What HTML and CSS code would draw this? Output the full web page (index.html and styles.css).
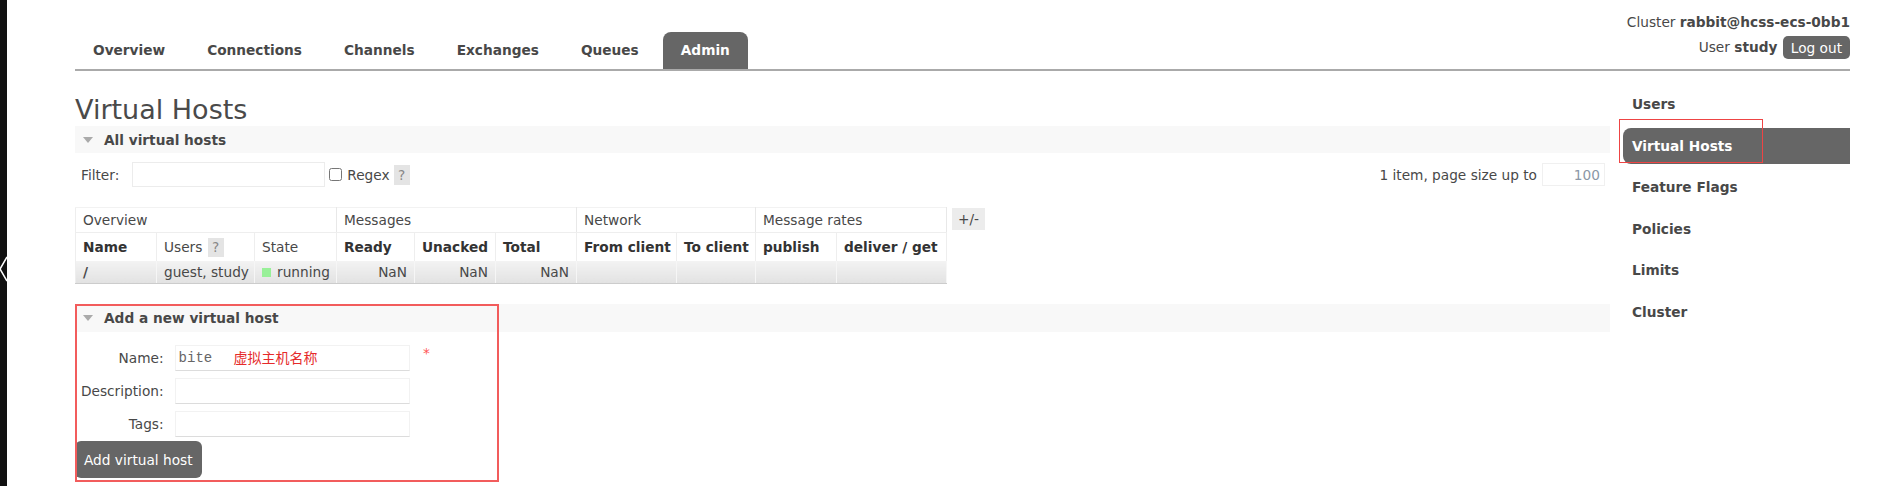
FILE: index.html
```html
<!DOCTYPE html>
<html>
<head>
    <title>RabbitMQ Management</title>
    <link rel="stylesheet" href="styles.css">
</head>
<body>
<div class="edge">
    <svg class="chevron" width="8" height="28" viewBox="0 0 8 28"><polyline points="7,2 0,14 7,26" fill="none" stroke="#fff" stroke-width="1.5"/></svg>
</div>
<div class="page">
    <div class="header">
        <ul class="tabs">
            <li><a>Overview</a></li>
            <li><a>Connections</a></li>
            <li><a>Channels</a></li>
            <li><a>Exchanges</a></li>
            <li><a>Queues</a></li>
            <li class="selected"><a>Admin</a></li>
        </ul>
        <div class="login">
            <p class="cluster">Cluster <b>rabbit@hcss-ecs-0bb1</b></p>
            <p class="user">User <b>study</b> <button class="logout">Log out</button></p>
        </div>
    </div>

    <div class="main">
        <div class="content">
            <h1>Virtual Hosts</h1>

            <div class="section">
                <h2><span class="arrow"></span>All virtual hosts</h2>
                <div class="filter-row">
                    <div class="filter">
                        <label>Filter:</label>
                        <input type="text" class="filter-input">
                        <input type="checkbox" class="regex-box">
                        <label class="regex">Regex</label>
                        <span class="help">?</span>
                    </div>
                    <div class="paging">
                        1 item, page size up to
                        <input type="text" class="page-size" value="100">
                    </div>
                </div>

                <div class="table-wrap">
                    <table class="list">
                        <colgroup>
                            <col style="width: 81px">
                            <col style="width: 98px">
                            <col style="width: 82px">
                            <col style="width: 78px">
                            <col style="width: 81px">
                            <col style="width: 81px">
                            <col style="width: 100px">
                            <col style="width: 79px">
                            <col style="width: 81px">
                            <col style="width: 110px">
                        </colgroup>
                        <tr class="group">
                            <th colspan="3">Overview</th>
                            <th colspan="3">Messages</th>
                            <th colspan="2">Network</th>
                            <th colspan="2">Message rates</th>
                        </tr>
                        <tr class="cols">
                            <th class="sort">Name</th>
                            <th>Users <span class="help">?</span></th>
                            <th>State</th>
                            <th class="sort">Ready</th>
                            <th class="sort">Unacked</th>
                            <th class="sort">Total</th>
                            <th class="sort">From client</th>
                            <th class="sort">To client</th>
                            <th class="sort">publish</th>
                            <th class="sort">deliver / get</th>
                        </tr>
                        <tr class="row">
                            <td><b>/</b></td>
                            <td>guest, study</td>
                            <td><span class="running"></span>running</td>
                            <td class="num">NaN</td>
                            <td class="num">NaN</td>
                            <td class="num">NaN</td>
                            <td></td>
                            <td></td>
                            <td></td>
                            <td></td>
                        </tr>
                    </table>
                    <span class="plusminus">+/-</span>
                </div>
            </div>

            <div class="section add">
                <h2><span class="arrow"></span>Add a new virtual host</h2>
                <form onsubmit="return false">
                    <table class="form">
                        <tr>
                            <th>Name:</th>
                            <td>
                                <span class="field">
                                    <input type="text" class="name-input" value="bite">
                                    <span class="note">虚拟主机名称</span>
                                </span>
                                <span class="mand">*</span>
                            </td>
                        </tr>
                        <tr>
                            <th>Description:</th>
                            <td><input type="text"></td>
                        </tr>
                        <tr>
                            <th>Tags:</th>
                            <td><input type="text"></td>
                        </tr>
                    </table>
                    <button type="submit" class="action">Add virtual host</button>
                </form>
                <div class="mark mark-form"></div>
            </div>
        </div>

        <ul class="nav">
            <li>Users</li>
            <li class="selected">Virtual Hosts<span class="mark mark-nav"></span></li>
            <li>Feature Flags</li>
            <li>Policies</li>
            <li>Limits</li>
            <li>Cluster</li>
        </ul>
    </div>
</div>
</body>
</html>
```

FILE: styles.css
```css
body {
    margin: 0;
    display: flex;
    min-height: 100vh;
    background-color: #fff;
    color: #484848;
    font-family: "DejaVu Sans", Verdana, sans-serif;
    font-size: 13.7px;
}

.edge {
    width: 7px;
    background-color: #111;
    padding-top: 255px;
    overflow: hidden;
}

.chevron {
    display: block;
}

.page {
    flex: 1;
    padding: 0 37px 0 68px;
}

/* top bar */

.header {
    display: flex;
    justify-content: space-between;
    align-items: flex-end;
    border-bottom: 2px solid #aaa;
}

.tabs {
    display: flex;
    gap: 6px;
    margin: 0;
    padding: 0;
    list-style: none;
}

.tabs a {
    display: block;
    padding: 10px 18px 11px;
    line-height: 16px;
    font-weight: bold;
    color: #484848;
}

.tabs .selected a {
    background-color: #666;
    color: #fff;
    border-radius: 8px 8px 0 0;
}

.login {
    padding-top: 14px;
    margin-bottom: 10px;
    text-align: right;
}

.login p {
    margin: 0;
}

.cluster {
    line-height: 16px;
    margin-bottom: 6px !important;
}

.user {
    line-height: 23px;
}

.logout {
    height: 23px;
    padding: 0 8px;
    margin-left: 1px;
    border: none;
    border-radius: 5px;
    background-color: #666;
    color: #fff;
    font-family: inherit;
    font-size: 13.7px;
    vertical-align: top;
}

/* main area */

.main {
    display: flex;
}

.content {
    flex: 1;
    padding-top: 23px;
}

h1 {
    margin: 0 0 1px;
    font-size: 27px;
    font-weight: normal;
    line-height: 31px;
    color: #4a4a4a;
}

.section {
    position: relative;
}

h2 {
    display: flex;
    align-items: center;
    height: 27px;
    margin: 0;
    padding-left: 8px;
    background-color: #f8f8f8;
    font-size: 13.7px;
    font-weight: bold;
}

.arrow {
    width: 0;
    height: 0;
    margin-right: 11px;
    border-left: 5px solid transparent;
    border-right: 5px solid transparent;
    border-top: 6px solid #aaa;
}

.filter-row {
    display: flex;
    justify-content: space-between;
    align-items: center;
    height: 27px;
    margin-top: 8px;
}

.filter {
    display: flex;
    align-items: center;
    padding-left: 6px;
}

input[type=text] {
    box-sizing: border-box;
    border: 1px solid #ececec;
    background-color: #fff;
    font-family: inherit;
    font-size: 13.7px;
    outline: none;
}

.filter-input {
    width: 193px;
    height: 25px;
    margin: 0 0 0 13px;
}

.regex-box {
    width: 13px;
    height: 13px;
    margin: 0 5px 0 4px;
}

.help {
    display: inline-block;
    width: 16px;
    height: 20px;
    margin-left: 4px;
    background-color: #e4e4e4;
    color: #888;
    text-align: center;
    line-height: 20px;
    font-weight: normal;
}

.paging {
    display: flex;
    align-items: center;
    margin-right: 5px;
}

.page-size {
    width: 63px;
    height: 23px;
    margin-left: 5px;
    text-align: right;
    color: #8b97a6;
    border-color: #f0f0f0 !important;
    padding-right: 4px;
}

/* vhost table */

.table-wrap {
    display: flex;
    align-items: flex-start;
    margin-top: 19px;
}

.list {
    width: 871px;
    table-layout: fixed;
    border-collapse: collapse;
    border-left: 1px solid #eee;
    border-top: 1px solid #f2f2f2;
    font-size: 13.7px;
}

.list th,
.list td {
    padding: 0 7px;
    text-align: left;
    white-space: nowrap;
    overflow: hidden;
}

.list .group th {
    height: 24px;
    font-weight: normal;
    border-right: 1px solid #e8e8e8;
    border-bottom: 1px solid #eee;
}

.list .cols th {
    height: 28px;
    font-weight: normal;
    border-right: 1px solid #eee;
}

.list .cols th.sort {
    font-weight: bold;
    color: #333;
}

.list .cols .help {
    height: 19px;
    line-height: 19px;
    margin-left: 1px;
}

.list .row td {
    height: 22px;
    background: linear-gradient(#f3f3f3, #e2e2e2);
    border-right: 1px solid #f6f6f6;
    border-bottom: 1px solid #ccc;
}

.list td.num {
    text-align: right;
}

.running {
    display: inline-block;
    width: 9px;
    height: 9px;
    margin-right: 6px;
    background-color: #98f098;
}

.plusminus {
    width: 33px;
    height: 22px;
    margin: 1px 0 0 5px;
    background-color: #ececec;
    text-align: center;
    line-height: 22px;
}

/* add form */

.add {
    margin-top: 20px;
}

.add h2 {
    height: 28px;
}

form {
    padding-top: 9px;
}

.form {
    border-collapse: collapse;
}

.form th {
    height: 33px;
    padding: 0 11px 0 6px;
    text-align: right;
    font-weight: normal;
}

.form td {
    padding: 0;
    white-space: nowrap;
}

.form input[type=text] {
    width: 235px;
    height: 26px;
    border-color: #f2f2f2;
    border-bottom-color: #dcdcdc;
    vertical-align: middle;
}

.field {
    position: relative;
    display: inline-block;
    vertical-align: middle;
}

.form .name-input {
    padding-left: 3px;
    font-family: "Liberation Mono", monospace;
    font-size: 14px;
    color: #666;
}

.note {
    position: absolute;
    left: 59px;
    top: 3px;
    color: #e52a2a;
    font-family: "Noto Sans CJK SC", sans-serif;
    font-size: 14px;
    line-height: 18px;
}

.mand {
    margin-left: 9px;
    color: #f55;
    vertical-align: 4px;
}

.action {
    height: 37px;
    margin-top: 1px;
    padding: 0 9px;
    border: none;
    border-radius: 6px;
    background-color: #666;
    color: #fff;
    font-family: inherit;
    font-size: 13.7px;
}

/* sidebar */

.nav {
    width: 227px;
    margin: 0 0 0 13px;
    padding: 15px 0 0;
    list-style: none;
}

.nav li {
    position: relative;
    height: 36px;
    margin-bottom: 5.5px;
    padding-left: 9px;
    line-height: 36px;
    font-weight: bold;
}

.nav .selected {
    background-color: #666;
    color: #fff;
    border-radius: 8px 0 0 8px;
}

/* red annotation boxes */

.mark {
    position: absolute;
    box-sizing: border-box;
    border: 2px solid #f25c5c;
}

.mark-form {
    left: 0;
    top: 0;
    width: 424px;
    height: 178px;
}

.mark-nav {
    left: -4px;
    top: -9px;
    width: 144px;
    height: 44px;
    border-width: 1.5px;
    border-color: #ee4444;
}
```
